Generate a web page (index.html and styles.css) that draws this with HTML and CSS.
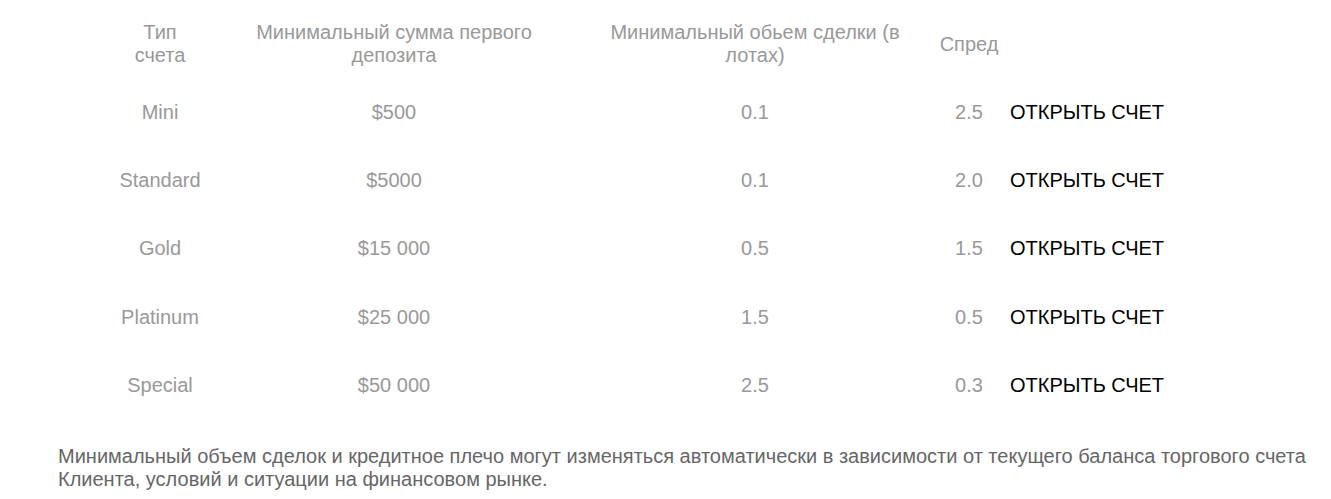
FILE: index.html
```html
<!DOCTYPE html>
<html lang="ru">
<head>
<meta charset="utf-8">
<title>Типы счетов</title>
<link rel="stylesheet" href="styles.css">
</head>
<body>
<div class="accounts">
  <div class="cell c1 head">Тип счета</div>
  <div class="cell c2 head">Минимальный сумма первого депозита</div>
  <div class="cell c3 head">Минимальный обьем сделки (в лотах)</div>
  <div class="cell c4 head">Спред</div>
  <div class="cell c5 head"></div>

  <div class="cell c1">Mini</div>
  <div class="cell c2">$500</div>
  <div class="cell c3">0.1</div>
  <div class="cell c4">2.5</div>
  <div class="cell c5"><a class="open" href="#">ОТКРЫТЬ СЧЕТ</a></div>

  <div class="cell c1">Standard</div>
  <div class="cell c2">$5000</div>
  <div class="cell c3">0.1</div>
  <div class="cell c4">2.0</div>
  <div class="cell c5"><a class="open" href="#">ОТКРЫТЬ СЧЕТ</a></div>

  <div class="cell c1">Gold</div>
  <div class="cell c2">$15 000</div>
  <div class="cell c3">0.5</div>
  <div class="cell c4">1.5</div>
  <div class="cell c5"><a class="open" href="#">ОТКРЫТЬ СЧЕТ</a></div>

  <div class="cell c1">Platinum</div>
  <div class="cell c2">$25 000</div>
  <div class="cell c3">1.5</div>
  <div class="cell c4">0.5</div>
  <div class="cell c5"><a class="open" href="#">ОТКРЫТЬ СЧЕТ</a></div>

  <div class="cell c1">Special</div>
  <div class="cell c2">$50 000</div>
  <div class="cell c3">2.5</div>
  <div class="cell c4">0.3</div>
  <div class="cell c5"><a class="open" href="#">ОТКРЫТЬ СЧЕТ</a></div>
</div>
<p class="note">Минимальный объем сделок и кредитное плечо могут изменяться автоматически в зависимости от текущего баланса торгового счета Клиента, условий и ситуации на финансовом рынке.</p>
</body>
</html>
```

FILE: styles.css
```css
html, body {
  background: #ffffff;
}
body {
  margin: 8px;
  font-family: "Liberation Sans", Arial, sans-serif;
  font-size: 20px;
  line-height: 23px;
}
.accounts {
  display: grid;
  grid-template-columns: 96px 372px 350px 78px 1fr;
  grid-template-rows: 68px repeat(5, 68.4px);
  padding-left: 104px;
  padding-top: 2px;
  color: #999999;
}
.cell {
  display: flex;
  align-items: center;
  justify-content: center;
  text-align: center;
  padding: 0 16px;
}
.c1 {
  padding: 0 4px;
}
.c4 {
  padding: 0 4px;
}
.c5 {
  justify-content: flex-start;
  text-align: left;
  padding: 0 2px;
}
.open {
  color: #000000;
  text-decoration: none;
}
.note {
  margin: 25px 0 0 50px;
  color: #666666;
}
```
